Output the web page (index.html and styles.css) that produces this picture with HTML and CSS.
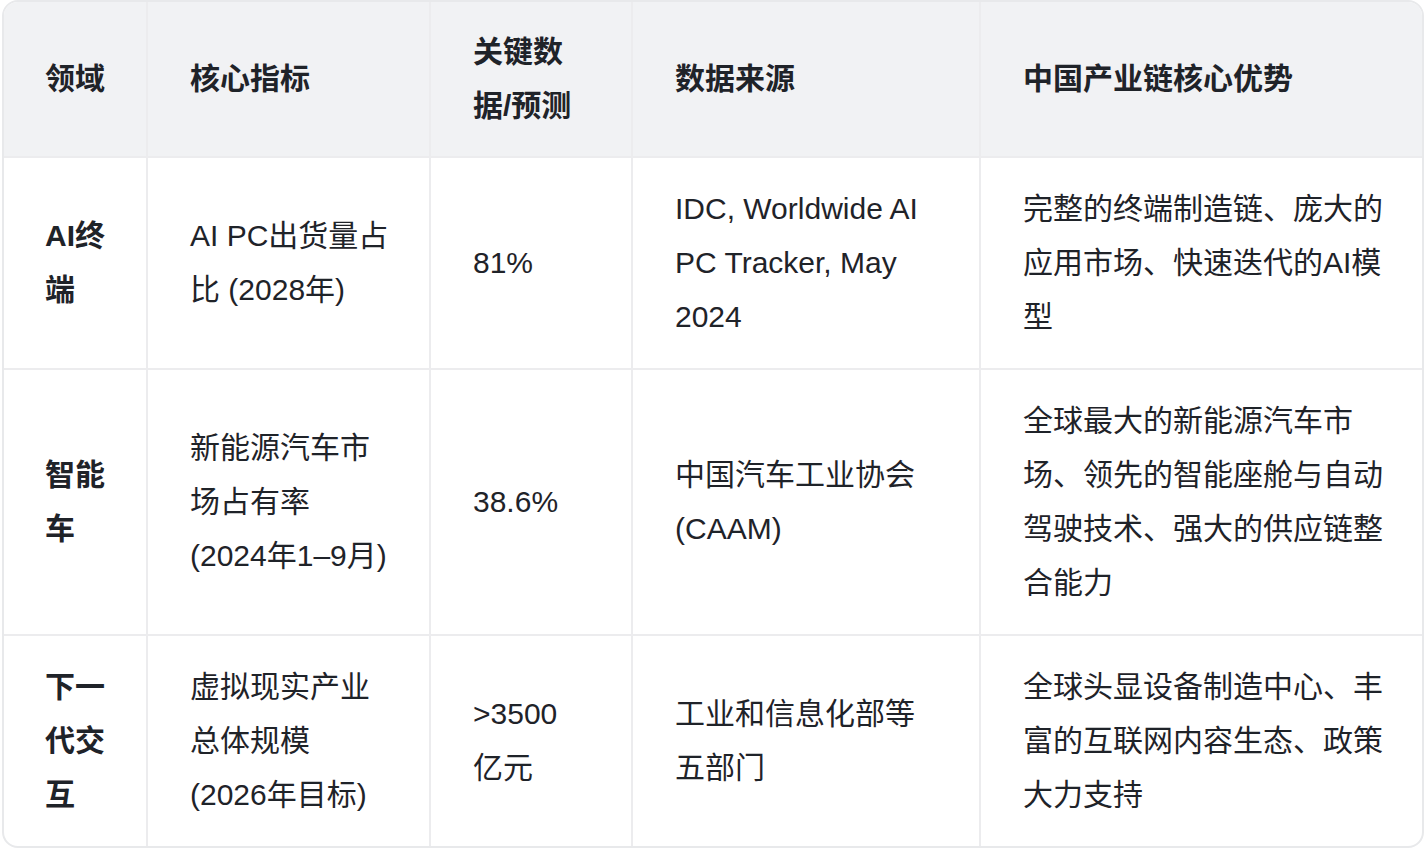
FILE: index.html
```html
<!DOCTYPE html>
<html lang="zh-CN">
<head>
<meta charset="utf-8">
<title>产业链对比</title>
<link rel="stylesheet" href="styles.css">
</head>
<body>
<div class="table-wrap">
  <table class="data-table">
    <colgroup>
      <col class="c1"><col class="c2"><col class="c3"><col class="c4"><col class="c5">
    </colgroup>
    <thead>
      <tr>
        <th>领域</th>
        <th>核心指标</th>
        <th class="num">关键数据/预测</th>
        <th>数据来源</th>
        <th>中国产业链核心优势</th>
      </tr>
    </thead>
    <tbody>
      <tr>
        <td class="field">AI终端</td>
        <td>AI PC出货量占比 (2028年)</td>
        <td class="num">81%</td>
        <td>IDC, Worldwide AI PC Tracker, May 2024</td>
        <td>完整的终端制造链、庞大的应用市场、快速迭代的AI模型</td>
      </tr>
      <tr>
        <td class="field">智能车</td>
        <td>新能源汽车市场占有率 (2024年1–9月)</td>
        <td class="num">38.6%</td>
        <td>中国汽车工业协会 (CAAM)</td>
        <td>全球最大的新能源汽车市场、领先的智能座舱与自动驾驶技术、强大的供应链整合能力</td>
      </tr>
      <tr>
        <td class="field">下一代交互</td>
        <td>虚拟现实产业总体规模 (2026年目标)</td>
        <td class="num">&gt;3500亿元</td>
        <td>工业和信息化部等五部门</td>
        <td>全球头显设备制造中心、丰富的互联网内容生态、政策大力支持</td>
      </tr>
    </tbody>
  </table>
</div>
</body>
</html>
```

FILE: styles.css
```css
html, body {
  margin: 0;
  padding: 0;
  background: #ffffff;
}

body {
  font-family: "Liberation Sans", "Noto Sans CJK SC", sans-serif;
  color: #1f2329;
}

.table-wrap {
  margin: 0 2px;
  border: 2px solid #e8e9eb;
  border-radius: 16px;
  overflow: hidden;
}

.data-table {
  width: 100%;
  table-layout: fixed;
  border-collapse: separate;
  border-spacing: 0;
  font-size: 30px;
  line-height: 54px;
}

.c1 { width: 144px; }
.c2 { width: 283px; }
.c3 { width: 202px; }
.c4 { width: 348px; }
.c5 { width: auto; }

.data-table th,
.data-table td {
  text-align: left;
  vertical-align: middle;
  padding: 24px 40px 24px 42px;
  border-right: 2px solid #ececee;
  border-bottom: 2px solid #ececee;
  word-break: break-word;
}

.data-table th:first-child,
.data-table td:first-child {
  padding-left: 41px;
}

.data-table th.num,
.data-table td.num {
  padding-right: 48px;
}

.data-table th:last-child,
.data-table td:last-child {
  border-right: none;
  padding-right: 36px;
}

.data-table tbody tr:last-child td {
  border-bottom: none;
}

.data-table th {
  background: #f1f2f4;
  font-weight: 700;
  padding-top: 23px;
  padding-bottom: 23px;
}

.data-table td.field {
  font-weight: 700;
}
```
